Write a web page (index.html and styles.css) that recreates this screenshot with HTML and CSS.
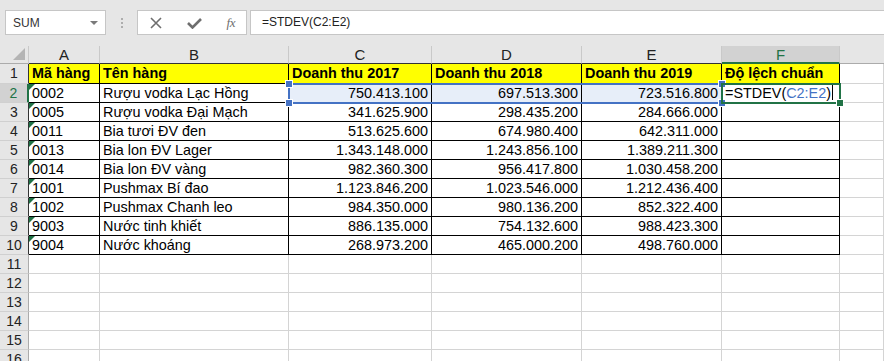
FILE: index.html
```html
<!DOCTYPE html>
<html lang="vi">
<head>
    <meta charset="UTF-8">
    <title>Doanh thu - STDEV</title>
    <link rel="stylesheet" href="styles.css">
</head>
<body>
    <div class="bar">
        <div class="namebox"><span>SUM</span><span class="caret"></span></div>
        <div class="grip"><i></i><i></i><i></i></div>
        <div class="tools">
            <svg width="12" height="12" viewBox="0 0 12 12"><path d="M1 1 L11 11 M11 1 L1 11" stroke="#6e6e6e" stroke-width="1.6" fill="none"/></svg>
            <svg width="15" height="12" viewBox="0 0 15 12"><path d="M1 6 L5.5 10.5 L14 2" stroke="#6e6e6e" stroke-width="2.6" fill="none"/></svg>
            <span class="fx">fx</span>
        </div>
        <div class="formula">=STDEV(C2:E2)</div>
    </div>

    <div class="sheet">
        <!-- column headers -->
        <div class="corner"><svg width="12" height="12" viewBox="0 0 12 12"><path d="M12 0 L12 12 L0 12 Z" fill="#b4b4b4"/></svg></div>
        <div class="ch">A</div>
        <div class="ch">B</div>
        <div class="ch">C</div>
        <div class="ch">D</div>
        <div class="ch">E</div>
        <div class="ch sel">F</div>
        <div class="ch last"></div>

        <!-- row 1 -->
        <div class="rh in">1</div>
        <div class="c b hd">Mã hàng</div>
        <div class="c b hd">Tên hàng</div>
        <div class="c b hd">Doanh thu 2017</div>
        <div class="c b hd">Doanh thu 2018</div>
        <div class="c b hd">Doanh thu 2019</div>
        <div class="c b hd">Độ lệch chuẩn</div>
        <div class="c"></div>

        <!-- row 2 -->
        <div class="rh in sel">2</div>
        <div class="c b txt">0002</div>
        <div class="c b">Rượu vodka Lạc Hồng</div>
        <div class="c b num pick">750.413.100</div>
        <div class="c b num pick">697.513.300</div>
        <div class="c b num pick">723.516.800</div>
        <div class="c b edit">=STDEV(<span class="ref">C2:E2</span>)<span class="cursor"></span></div>
        <div class="c"></div>

        <div class="rh in">3</div>
        <div class="c b txt">0005</div>
        <div class="c b">Rượu vodka Đại Mạch</div>
        <div class="c b num">341.625.900</div>
        <div class="c b num">298.435.200</div>
        <div class="c b num">284.666.000</div>
        <div class="c b"></div>
        <div class="c"></div>

        <div class="rh in">4</div>
        <div class="c b txt">0011</div>
        <div class="c b">Bia tươi ĐV đen</div>
        <div class="c b num">513.625.600</div>
        <div class="c b num">674.980.400</div>
        <div class="c b num">642.311.000</div>
        <div class="c b"></div>
        <div class="c"></div>

        <div class="rh in">5</div>
        <div class="c b txt">0013</div>
        <div class="c b">Bia lon ĐV Lager</div>
        <div class="c b num">1.343.148.000</div>
        <div class="c b num">1.243.856.100</div>
        <div class="c b num">1.389.211.300</div>
        <div class="c b"></div>
        <div class="c"></div>

        <div class="rh in">6</div>
        <div class="c b txt">0014</div>
        <div class="c b">Bia lon ĐV vàng</div>
        <div class="c b num">982.360.300</div>
        <div class="c b num">956.417.800</div>
        <div class="c b num">1.030.458.200</div>
        <div class="c b"></div>
        <div class="c"></div>

        <div class="rh in">7</div>
        <div class="c b txt">1001</div>
        <div class="c b">Pushmax Bí đao</div>
        <div class="c b num">1.123.846.200</div>
        <div class="c b num">1.023.546.000</div>
        <div class="c b num">1.212.436.400</div>
        <div class="c b"></div>
        <div class="c"></div>

        <div class="rh in">8</div>
        <div class="c b txt">1002</div>
        <div class="c b">Pushmax Chanh leo</div>
        <div class="c b num">984.350.000</div>
        <div class="c b num">980.136.200</div>
        <div class="c b num">852.322.400</div>
        <div class="c b"></div>
        <div class="c"></div>

        <div class="rh in">9</div>
        <div class="c b txt">9003</div>
        <div class="c b">Nước tinh khiết</div>
        <div class="c b num">886.135.000</div>
        <div class="c b num">754.132.600</div>
        <div class="c b num">988.423.300</div>
        <div class="c b"></div>
        <div class="c"></div>

        <div class="rh in">10</div>
        <div class="c b txt">9004</div>
        <div class="c b">Nước khoáng</div>
        <div class="c b num">268.973.200</div>
        <div class="c b num">465.000.200</div>
        <div class="c b num">498.760.000</div>
        <div class="c b"></div>
        <div class="c"></div>

        <!-- empty rows -->
        <div class="rh">11</div><div class="c"></div><div class="c"></div><div class="c"></div><div class="c"></div><div class="c"></div><div class="c"></div><div class="c"></div>
        <div class="rh">12</div><div class="c"></div><div class="c"></div><div class="c"></div><div class="c"></div><div class="c"></div><div class="c"></div><div class="c"></div>
        <div class="rh">13</div><div class="c"></div><div class="c"></div><div class="c"></div><div class="c"></div><div class="c"></div><div class="c"></div><div class="c"></div>
        <div class="rh">14</div><div class="c"></div><div class="c"></div><div class="c"></div><div class="c"></div><div class="c"></div><div class="c"></div><div class="c"></div>
        <div class="rh">15</div><div class="c"></div><div class="c"></div><div class="c"></div><div class="c"></div><div class="c"></div><div class="c"></div><div class="c"></div>
        <div class="rh">16</div><div class="c"></div><div class="c"></div><div class="c"></div><div class="c"></div><div class="c"></div><div class="c"></div><div class="c"></div>

        <!-- formula reference range and active cell -->
        <div class="range">
            <span class="h tl"></span><span class="h bl"></span>
            <span class="h tr"></span><span class="h br"></span>
        </div>
        <div class="active"><span class="grab"></span></div>
    </div>
</body>
</html>
```

FILE: styles.css
```css
* {
    box-sizing: border-box;
}

body {
    margin: 0;
    background-color: #fff;
    font-family: "Liberation Sans", Arial, sans-serif;
    color: #000;
    overflow: hidden;
}

/* formula bar */
.bar {
    height: 46px;
    background-color: #e6e6e6;
    display: flex;
    align-items: flex-start;
    padding: 10px 0 0 5px;
}

.namebox {
    width: 101px;
    height: 25px;
    border: 1px solid #c6c6c6;
    background-color: #fff;
    display: flex;
    align-items: center;
    justify-content: space-between;
    padding: 0 7px 0 7px;
    font-size: 12px;
    color: #333;
}

.caret {
    width: 0;
    height: 0;
    border-left: 4px solid transparent;
    border-right: 4px solid transparent;
    border-top: 4px solid #7a7a7a;
}

.grip {
    display: flex;
    flex-direction: column;
    gap: 2px;
    margin: 8px 14px 0 15px;
}

.grip i {
    display: block;
    width: 2px;
    height: 2px;
    background-color: #adadad;
}

.tools {
    width: 110px;
    height: 25px;
    border: 1px solid #c6c6c6;
    background-color: #fff;
    display: flex;
    align-items: center;
    justify-content: space-between;
    padding: 0 11px 0 12px;
}

.fx {
    font-family: "Liberation Serif", serif;
    font-style: italic;
    font-size: 13px;
    color: #6e6e6e;
    letter-spacing: -0.5px;
}

.formula {
    flex: 1;
    height: 25px;
    margin-left: 3px;
    border: 1px solid #c6c6c6;
    border-right: none;
    background-color: #fff;
    padding-left: 11px;
    font-size: 12px;
    line-height: 23px;
    color: #222;
}

/* sheet grid */
.sheet {
    position: relative;
    display: grid;
    grid-template-columns: 29px 71px 189px 143px 150px 140px 118px 1fr;
    grid-template-rows: 18px 20px;
    grid-auto-rows: 19px;
}

.corner {
    background-color: #e6e6e6;
    border-right: 1px solid #c9c9c9;
    border-bottom: 1px solid #ababab;
    display: flex;
    align-items: flex-end;
    justify-content: flex-end;
    padding: 0 3px 3px 0;
}

.ch {
    background-color: #e6e6e6;
    border-right: 1px solid #c9c9c9;
    border-bottom: 1px solid #333;
    text-align: center;
    font-size: 15px;
    line-height: 17px;
    color: #222;
}

.ch.last {
    border-right: none;
    border-bottom-color: #ababab;
}

.ch.sel {
    background-color: #d2d2d2;
    color: #217346;
    border-bottom: 2px solid #217346;
}

.rh {
    background-color: #e6e6e6;
    border-right: 1px solid #ababab;
    border-bottom: 1px solid #d0d0d0;
    text-align: center;
    font-size: 14px;
    line-height: 18px;
    color: #222;
}

.rh.in {
    border-right-color: #333;
}

.rh.sel {
    background-color: #d2d2d2;
    color: #217346;
    border-right: 2px solid #217346;
}

.c {
    position: relative;
    border-right: 1px solid #d4d4d4;
    border-bottom: 1px solid #d4d4d4;
    padding: 0 3px;
    font-size: 14.4px;
    line-height: 19px;
    white-space: nowrap;
    overflow: hidden;
}

.c.b {
    border-color: #000;
}

.hd {
    background-color: #ffff00;
    font-weight: bold;
}

.num {
    text-align: right;
}

.pick {
    background-color: #e7eef9;
}

/* number stored as text marker */
.txt::before {
    content: "";
    position: absolute;
    top: 0;
    left: 0;
    border-top: 6px solid #1e7145;
    border-right: 6px solid transparent;
}

.ref {
    color: #4472c4;
}

.cursor {
    display: inline-block;
    width: 1px;
    height: 15px;
    margin-left: 1px;
    vertical-align: -2px;
    background-color: #000;
}

/* selection overlays */
.range {
    position: absolute;
    left: 288px;
    top: 37px;
    width: 435px;
    height: 21px;
    border: 2px solid #4472c4;
    pointer-events: none;
}

.h {
    position: absolute;
    width: 6px;
    height: 6px;
    background-color: #4472c4;
    outline: 1px solid #fff;
}

.h.tl { left: -4px; top: -4px; }
.h.bl { left: -4px; bottom: -4px; }
.h.tr { right: -4px; top: -4px; }
.h.br { right: -4px; bottom: -4px; }

.active {
    position: absolute;
    left: 721px;
    top: 37px;
    width: 120px;
    height: 21px;
    border: 2px solid #217346;
    pointer-events: none;
}

.grab {
    position: absolute;
    right: -4px;
    bottom: -4px;
    width: 6px;
    height: 6px;
    background-color: #217346;
    outline: 1px solid #fff;
}
```
